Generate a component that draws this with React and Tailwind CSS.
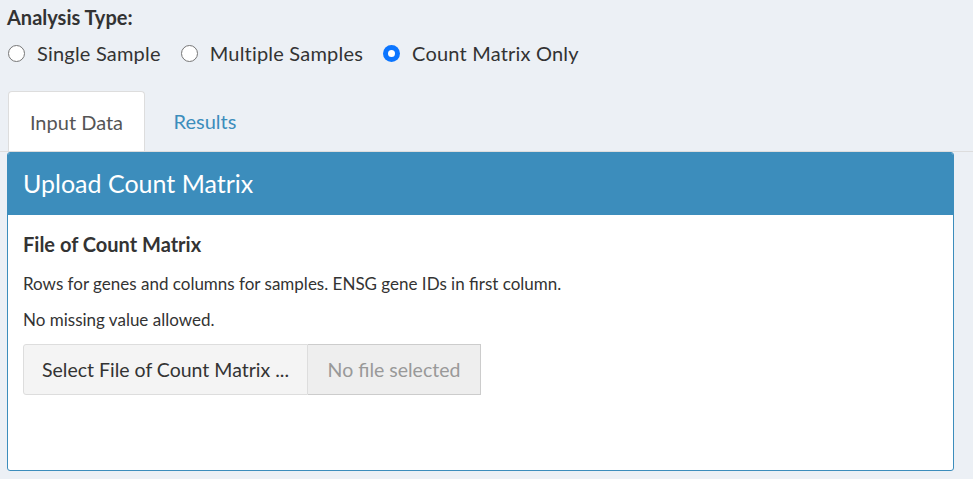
import React, { useState } from 'react';

const options = ['Single Sample', 'Multiple Samples', 'Count Matrix Only'];

function Radio({ label, checked, onChange }) {
    return (
        <label className="flex items-center cursor-pointer" onClick={onChange}>
            {checked ? (
                <span className="w-[17px] h-[17px] rounded-full bg-[#0b75ff] flex items-center justify-center">
                    <span className="w-[7px] h-[7px] rounded-full bg-white" />
                </span>
            ) : (
                <span className="w-[17px] h-[17px] rounded-full border border-[#767676] bg-white" />
            )}
            <span className="ml-[12px]">{label}</span>
        </label>
    );
}

function App() {
    const [analysis, setAnalysis] = useState('Count Matrix Only');

    return (
        <div
            className="w-[973px] h-[479px] bg-[#ecf0f5] text-[#333] overflow-hidden"
            style={{ fontFamily: 'Lato, "Source Sans Pro", sans-serif' }}
        >
            <div className="pl-[7px] pt-[6px]">
                <div className="text-[20px] font-bold leading-[22px]">Analysis Type:</div>
                <div className="flex items-center gap-[20px] mt-[14px] text-[20px] leading-[22px] tracking-[0.2px] pl-[1px]">
                    {options.map((o) => (
                        <Radio key={o} label={o} checked={analysis === o} onChange={() => setAnalysis(o)} />
                    ))}
                </div>
            </div>

            <div className="mt-[27px] pl-[8px] flex border-b border-[#ddd]">
                <div className="w-[137px] h-[60px] bg-white border border-[#ddd] border-b-0 rounded-t-[4px] flex items-center justify-center text-[20px] text-[#555] -mb-[1px]">
                    Input Data
                </div>
                <div className="w-[120px] h-[60px] flex items-center justify-center text-[20px] text-[#3c8dbc]">
                    Results
                </div>
            </div>

            <div className="ml-[7px] w-[947px] h-[319px] bg-white border border-[#3c8dbc] rounded-[3px] overflow-hidden">
                <div className="h-[62px] bg-[#3c8dbc] flex items-center px-[15px] text-white text-[25px]">
                    Upload Count Matrix
                </div>
                <div className="px-[15px] pt-[16px]">
                    <div className="text-[20px] font-bold leading-[26px]">File of Count Matrix</div>
                    <p className="mt-[16px] text-[17px] leading-[22px]">
                        Rows for genes and columns for samples. ENSG gene IDs in first column.
                    </p>
                    <p className="mt-[14px] text-[17px] leading-[22px]">No missing value allowed.</p>
                    <div className="mt-[13px] flex h-[51px] text-[19.5px]">
                        <div className="w-[285px] bg-[#f4f4f4] border border-[#ddd] rounded-l-[3px] flex items-center justify-center text-[#333]">
                            Select File of Count Matrix ...
                        </div>
                        <div className="w-[173px] bg-[#eee] border border-[#ccc] border-l-0 flex items-center justify-center text-[#999]">
                            No file selected
                        </div>
                    </div>
                </div>
            </div>
        </div>
    );
}

export default App;
